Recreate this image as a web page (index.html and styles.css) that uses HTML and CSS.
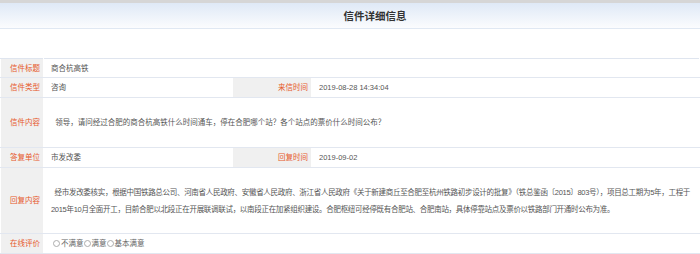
FILE: index.html
```html
<!doctype html>
<html lang="zh-CN">
  <head>
    <meta charset="UTF-8" />
    <title>信件详细信息</title>
    <link rel="stylesheet" href="styles.css">
  </head>
  <body>
    <div class="header">
      <h1>信件详细信息</h1>
    </div>
    <div class="spacer"></div>

    <table class="detail">
      <colgroup>
        <col class="c-label" />
        <col class="c-value" />
        <col class="c-label2" />
        <col />
      </colgroup>
      <tr class="r-short">
        <th>信件标题</th>
        <td colspan="3">商合杭高铁</td>
      </tr>
      <tr class="r-mid">
        <th>信件类型</th>
        <td>咨询</td>
        <th>来信时间</th>
        <td>2019-08-28 14:34:04</td>
      </tr>
      <tr class="r-content">
        <th>信件内容</th>
        <td colspan="3" class="text">&nbsp;&nbsp;领导，请问经过合肥的商合杭高铁什么时间通车，停在合肥哪个站？各个站点的票价什么时间公布？</td>
      </tr>
      <tr class="r-mid">
        <th>答复单位</th>
        <td>市发改委</td>
        <th>回复时间</th>
        <td>2019-09-02</td>
      </tr>
      <tr class="r-reply">
        <th>回复内容</th>
        <td colspan="3" class="text reply">&nbsp;&nbsp;经市发改委核实，根据中国铁路总公司、河南省人民政府、安徽省人民政府、浙江省人民政府《关于新建商丘至合肥至杭州铁路初步设计的批复》（铁总鉴函〔2015〕803号），项目总工期为5年，工程于2015年10月全面开工，目前合肥以北段正在开展联调联试，以南段正在加紧组织建设。合肥枢纽可经停既有合肥站、合肥南站，具体停靠站点及票价以铁路部门开通时公布为准。</td>
      </tr>
      <tr class="r-mid">
        <th>在线评价</th>
        <td colspan="3" class="rating">
          <label><input type="radio" name="pj" />不满意</label><label><input type="radio" name="pj" />满意</label><label><input type="radio" name="pj" />基本满意</label>
        </td>
      </tr>
    </table>
  </body>
</html>
```

FILE: styles.css
```css
body {
  margin: 0;
  background: #fff;
  font-family: "Liberation Sans", "Noto Sans CJK SC", sans-serif;
  font-size: 7.5px;
  color: #555;
}
.header {
  border-top: 3px solid #d6d6d6;
  height: 25px;
  background: linear-gradient(#dfe9f6, #fbfcfe);
  border-bottom: 1px solid #e0e8f3;
  padding-left: 50px;
}
.header h1 {
  margin: 0;
  text-align: center;
  font-size: 10.5px;
  line-height: 26px;
  font-weight: bold;
  color: #333;
}
.spacer {
  height: 29px;
}
.detail {
  width: 700px;
  border-collapse: collapse;
  table-layout: fixed;
}
.c-label {
  width: 43px;
}
.c-value {
  width: 189px;
}
.c-label2 {
  width: 79px;
}
.detail th,
.detail td {
  border: 1px solid #e2e7f0;
  border-left-color: #fff;
  border-right-color: #fff;
  padding: 0 7px;
  line-height: 17px;
}
.detail tr:first-child th,
.detail tr:first-child td {
  border-top: 1px solid #dfe5ef;
}
.detail th {
  background: #f0f0f0;
  color: #e6582a;
  font-weight: normal;
  text-align: right;
  padding: 0 3px 0 0;
}
.r-short th,
.r-short td {
  height: 18px;
}
.r-mid th,
.r-mid td {
  height: 19px;
}
.r-content th,
.r-content td {
  height: 49px;
}
.r-reply th,
.r-reply td {
  height: 65px;
}
.text {
  padding-right: 6px;
}
.reply {
  letter-spacing: -0.3px;
}
.rating label {
  display: inline-flex;
  align-items: center;
  color: #666;
}
.rating input {
  width: 7px;
  height: 7px;
  margin: 0 1px 0 0;
  opacity: 0.6;
}
.rating label:first-child input {
  margin-left: 2px;
}
```
